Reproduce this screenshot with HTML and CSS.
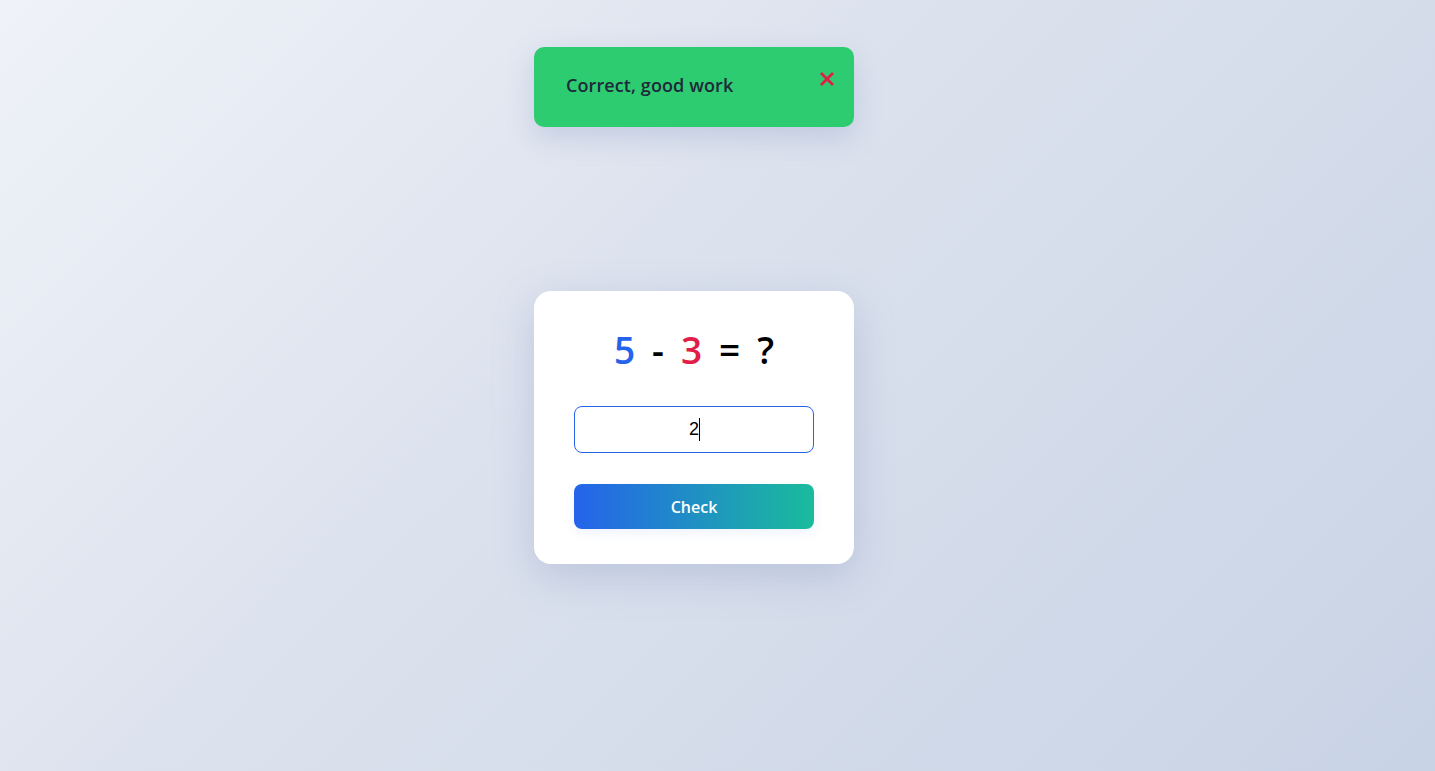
FILE: index.html
```html
<!DOCTYPE html>
<html lang="en">
<head>
<meta charset="utf-8">
<title>Math Quiz</title>
<link rel="stylesheet" href="styles.css">
</head>
<body>
<main class="stage">
  <div class="toast" role="status">
    <span class="toast-text">Correct, good work</span>
    <button class="toast-close" aria-label="Close">
      <svg viewBox="0 0 16 16" width="16" height="16"><path d="M2 2 L14 14 M14 2 L2 14" stroke="currentColor" stroke-width="2.8" stroke-linecap="butt" fill="none"/></svg>
    </button>
  </div>
  <section class="card">
    <div class="equation">
      <span class="num-a">5</span>
      <span class="op">-</span>
      <span class="num-b">3</span>
      <span class="op">=</span>
      <span class="op">?</span>
    </div>
    <div class="answer"><span class="answer-value">2</span><span class="caret"></span></div>
    <button class="check">Check</button>
  </section>
</main>
</body>
</html>
```
FILE: styles.css
```css
html, body {
  margin: 0;
  height: 100%;
}
body {
  background: linear-gradient(135deg, #eff2f8 0%, #dde3ee 40%, #c8d3e5 100%);
  font-family: "Open Sans", "Noto Sans", sans-serif;
  overflow: hidden;
}
.stage {
  width: 320px;
  margin-left: 534px;
  padding-top: 47px;
  display: flex;
  flex-direction: column;
}
.toast {
  height: 80px;
  box-sizing: border-box;
  background: #2ecc71;
  border-radius: 10px;
  padding: 0 19px 0 32px;
  display: flex;
  align-items: center;
  justify-content: space-between;
  box-shadow: 0 10px 28px rgba(120, 135, 185, 0.28);
  position: relative;
}
.toast-text {
  color: #1e293b;
  font-size: 18px;
  font-weight: 600;
  letter-spacing: 0.1px;
  margin-top: -5px;
}
.toast-close {
  border: none;
  background: none;
  padding: 0;
  color: #e11d48;
  width: 16px;
  height: 16px;
  align-self: flex-start;
  margin-top: 24px;
  display: flex;
}
.card {
  margin-top: 164px;
  background: #fff;
  border-radius: 17px;
  padding: 39px 40px 35px;
  box-shadow: 0 12px 40px rgba(110, 125, 180, 0.28);
  display: flex;
  flex-direction: column;
}
.equation {
  display: flex;
  justify-content: center;
  gap: 17px;
  font-size: 37px;
  font-weight: 600;
  line-height: 40px;
  height: 40px;
  color: #000;
}
.num-a { color: #2563eb; }
.num-b { color: #e11d48; }
.answer {
  margin-top: 36px;
  height: 47px;
  box-sizing: border-box;
  border: 1px solid #2563eb;
  border-radius: 8px;
  display: flex;
  align-items: center;
  justify-content: center;
  font-family: "Liberation Sans", Arial, sans-serif;
  font-size: 18px;
  color: #000;
}
.answer-value { padding-left: 1px; }
.caret {
  width: 1px;
  height: 23px;
  background: #000;
}
.check {
  margin-top: 31px;
  height: 45px;
  border: none;
  border-radius: 8px;
  background: linear-gradient(90deg, #2563eb 0%, #1abc9c 100%);
  color: #fff;
  font-family: "Open Sans", "Noto Sans", sans-serif;
  font-size: 16px;
  font-weight: 600;
  box-shadow: 0 4px 12px rgba(37, 99, 235, 0.08);
}
```
